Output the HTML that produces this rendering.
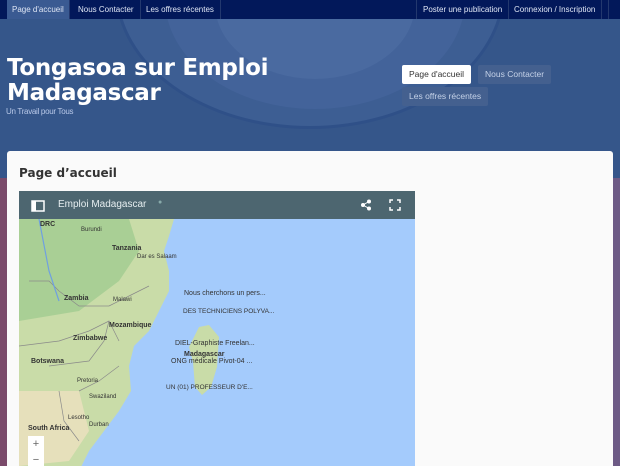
<!DOCTYPE html>
<html><head><meta charset="utf-8"><style>
*{margin:0;padding:0;box-sizing:border-box}
html,body{width:620px;height:466px;overflow:hidden}
body{font-family:"Liberation Sans","DejaVu Sans",sans-serif;background:#35558a;position:relative}
.top{position:absolute;left:0;top:0;width:620px;height:19px;background:#02185a;font-size:8px;color:#dfe6f5}
.top span{position:absolute;top:0;height:19px;line-height:19px;padding:0 6px;border-right:1px solid #23386e}
.hdr{position:absolute;left:0;top:19px;width:620px;height:140px;background:#35568a;overflow:hidden}
.circ{position:absolute;border-radius:50%}
h1{position:absolute;left:7px;top:56px;font-size:23px;line-height:25px;color:#fff;font-weight:bold;font-family:"DejaVu Sans",sans-serif;letter-spacing:-0.3px}
.sub{position:absolute;left:6px;top:107px;font-size:8px;color:#b8c8e8;letter-spacing:-0.3px}
.btn{position:absolute;height:19px;line-height:19px;font-size:8.5px;padding:0 7px;border-radius:2px;background:#44608f;color:#c5d2e8}
.card{position:absolute;left:7px;top:151px;width:606px;height:315px;background:#fafafa;border-radius:3px 3px 0 0}
.card h2{position:absolute;left:12px;top:15px;font-size:12px;color:#333;font-family:"DejaVu Sans",sans-serif}
.map{position:absolute;left:19px;top:191px;width:396px;height:275px;background:#a4cbfc;overflow:hidden}
.mbar{position:absolute;left:0;top:0;width:396px;height:28px;background:#4d6670;color:#e6eef0;font-size:10px}
.lbl{position:absolute;font-size:7px;color:#333;white-space:nowrap}
</style></head><body>
<div class="hdr">
 <div class="circ" style="left:115px;top:-170px;width:390px;height:280px;border:3px solid #2f5088;background:#3d5e93"></div>
 <div class="circ" style="left:165px;top:-130px;width:300px;height:220px;background:#43639a"></div>
 <div class="circ" style="left:215px;top:-90px;width:200px;height:150px;background:#4a6aa0"></div>
</div>
<div style="position:absolute;left:0;top:178px;width:8px;height:288px;background:#7a4a6a"></div>
<div style="position:absolute;left:612px;top:178px;width:8px;height:288px;background:#6d5a85"></div>
<div class="top">
 <span style="left:7px;background:#3a5a92;padding:0 5px">Page d'accueil</span>
 <span style="left:72px">Nous Contacter</span>
 <span style="left:140px">Les offres récentes</span>
 <span style="left:416px;border-left:1px solid #23386e">Poster une publication</span>
 <span style="left:508px">Connexion / Inscription</span>
 <span style="left:608px;border-right:none;border-left:1px solid #23386e"></span>
</div>
<h1>Tongasoa sur Emploi<br>Madagascar</h1>
<div class="sub">Un Travail pour Tous</div>
<div class="btn" style="left:402px;top:65px;background:#fff;color:#333">Page d'accueil</div>
<div class="btn" style="left:478px;top:65px">Nous Contacter</div>
<div class="btn" style="left:402px;top:87px">Les offres récentes</div>
<div class="card"><h2>Page d’accueil</h2></div>
<div class="map">
 <svg width="396" height="280" style="position:absolute;left:0;top:0">
  <path d="M0,28 L155,28 L150,45 L145,60 L150,80 L150,100 L140,120 L130,140 L115,155 L110,175 L112,200 L100,220 L85,240 L70,260 L60,280 L0,280Z" fill="#c9dca8"/>
  <path d="M0,28 L110,28 L120,60 L100,90 L60,120 L0,130Z" fill="#a9cf95"/>
  <path d="M0,200 L60,200 L70,240 L50,270 L0,275Z" fill="#e6e0bb"/>
  <path d="M180,136 L190,134 L200,146 L198,176 L192,196 L183,204 L176,196 L174,171 L170,156Z" fill="#c9dca8"/>
  <g fill="none" stroke="#8a8a8a" stroke-width="0.7">
   <path d="M10,90 L30,90 L40,100 L60,115 L90,115 L110,105 L130,95"/>
   <path d="M0,155 L40,150 L70,140 L90,130 L100,150"/>
   <path d="M30,175 L70,170 L85,150 L90,130 M60,200 L80,190 L100,175"/>
   <path d="M40,200 L45,230 L60,250"/>
  </g>
  <path d="M20,28 L30,80 L40,110" stroke="#6fa0e0" stroke-width="1.2" fill="none"/>
 </svg>
 <div class="mbar">
  <svg width="14" height="12" style="position:absolute;left:12px;top:9px"><rect x="1" y="1" width="12" height="10" fill="none" stroke="#fff" stroke-width="1.5"/><rect x="1" y="1" width="4" height="10" fill="#fff"/></svg>
  <span style="position:absolute;left:39px;top:8px">Emploi Madagascar</span>
  <span style="position:absolute;left:139px;top:8px;font-size:7px;color:#8aa">●</span>
  <svg width="12" height="12" style="position:absolute;left:341px;top:8px"><circle cx="9" cy="2.5" r="2" fill="#fff"/><circle cx="3" cy="6" r="2" fill="#fff"/><circle cx="9" cy="9.5" r="2" fill="#fff"/><path d="M9,2.5 L3,6 L9,9.5" stroke="#fff" fill="none"/></svg>
  <svg width="12" height="12" style="position:absolute;left:370px;top:8px" fill="none" stroke="#fff" stroke-width="1.5"><path d="M1,4V1H4M8,1H11V4M11,8V11H8M4,11H1V8"/></svg>
 </div>
 <div class="lbl" style="left:21px;top:30px;font-weight:bold">DRC</div>
 <div class="lbl" style="left:62px;top:36px;font-size:6px">Burundi</div>
 <div class="lbl" style="left:93px;top:54px;font-weight:bold">Tanzania</div>
 <div class="lbl" style="left:118px;top:63px;font-size:6px">Dar es Salaam</div>
 <div class="lbl" style="left:45px;top:104px;font-weight:bold">Zambia</div>
 <div class="lbl" style="left:94px;top:106px;font-size:6px">Malawi</div>
 <div class="lbl" style="left:90px;top:131px;font-weight:bold">Mozambique</div>
 <div class="lbl" style="left:54px;top:144px;font-weight:bold">Zimbabwe</div>
 <div class="lbl" style="left:12px;top:167px;font-weight:bold">Botswana</div>
 <div class="lbl" style="left:58px;top:187px;font-size:6px">Pretoria</div>
 <div class="lbl" style="left:70px;top:203px;font-size:6px">Swaziland</div>
 <div class="lbl" style="left:49px;top:224px;font-size:6px">Lesotho</div>
 <div class="lbl" style="left:70px;top:231px;font-size:6px">Durban</div>
 <div class="lbl" style="left:9px;top:234px;font-weight:bold">South Africa</div>
 <div class="lbl" style="left:165px;top:99px">Nous cherchons un pers...</div>
 <div class="lbl" style="left:164px;top:117px;font-size:6.5px">DES TECHNICIENS POLYVA...</div>
 <div class="lbl" style="left:156px;top:149px">DIEL-Graphiste Freelan...</div>
 <div class="lbl" style="left:165px;top:160px;font-weight:bold">Madagascar</div>
 <div class="lbl" style="left:152px;top:167px">ONG médicale Pivot-04 ...</div>
 <div class="lbl" style="left:147px;top:193px;font-size:6.5px">UN (01) PROFESSEUR D'E...</div>
 <div style="position:absolute;left:9px;top:245px;width:16px;height:35px;background:#fff;color:#666;font-size:11px;text-align:center;line-height:16px">+<br>−</div>
</div>
</body></html>
